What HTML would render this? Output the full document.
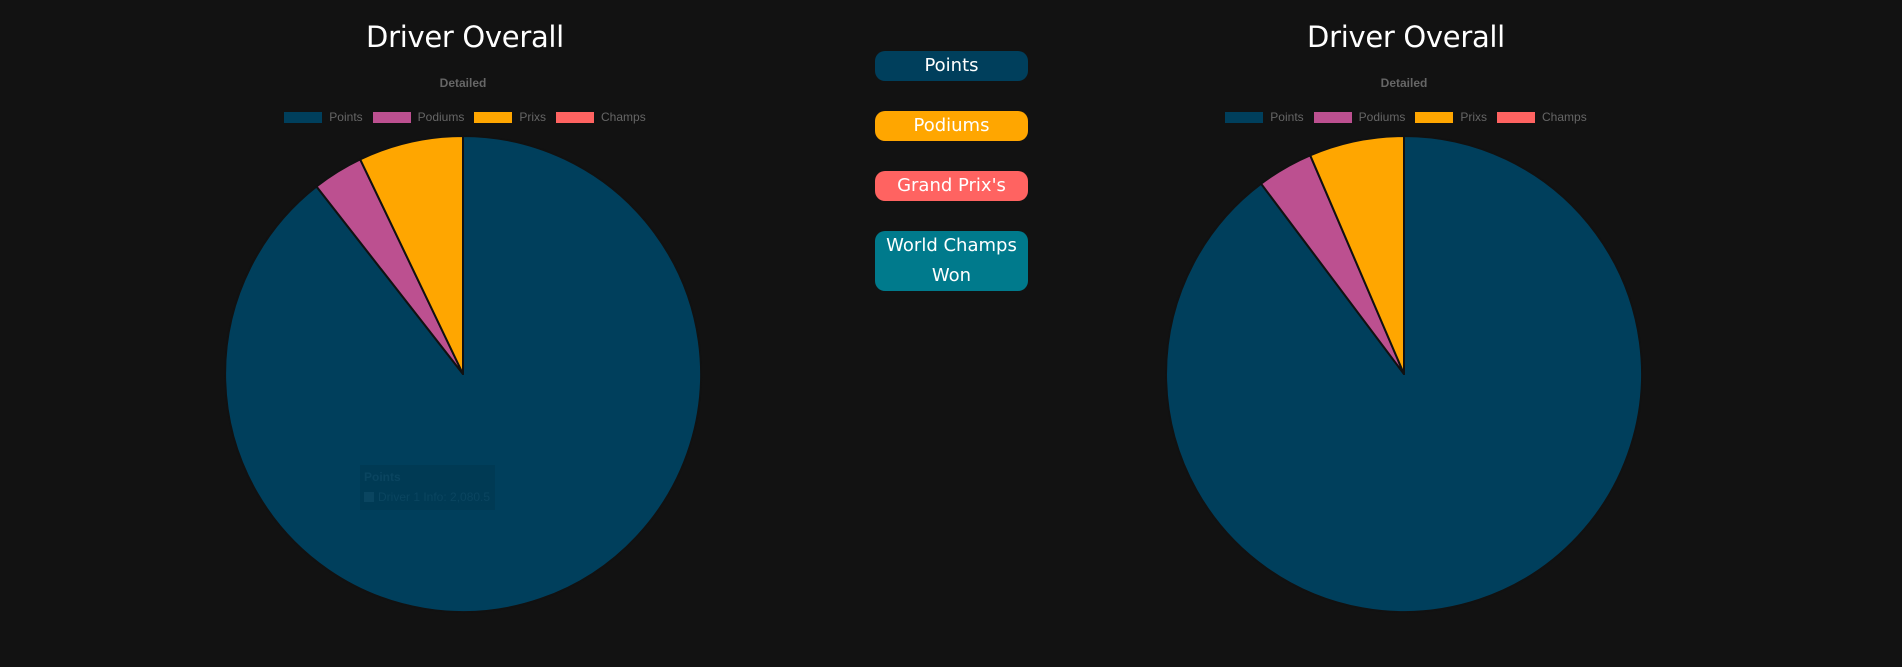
<!DOCTYPE html>
<html><head><style>
body{margin:0;width:1902px;height:667px;background:#121212;position:relative;overflow:hidden;font-family:"DejaVu Sans","Liberation Sans",sans-serif}
.t{position:absolute;top:20px;width:300px;text-align:center;color:#fff;font-size:29px;letter-spacing:-0.3px}
.d{position:absolute;top:76px;width:300px;text-align:center;color:#666;font:bold 12px "Liberation Sans",sans-serif}
.lg{position:absolute;top:110px;width:500px;font:12px "Liberation Sans",sans-serif;color:#666;display:flex;justify-content:center;align-items:center;white-space:nowrap}
.lg i{display:inline-block;width:38px;height:11px;margin:0 7px 0 10px}
.lg i:first-child{margin-left:0}
.b{position:absolute;left:875px;width:153px;border-radius:10px;color:#fff;text-align:center;font-size:18px;line-height:30px}
</style></head><body>
<div class="t" style="left:315px">Driver Overall</div>
<div class="t" style="left:1256px">Driver Overall</div>
<div class="d" style="left:313px">Detailed</div>
<div class="d" style="left:1254px">Detailed</div>
<div class="lg" style="left:215px"><i style="background:#003f5c"></i>Points<i style="background:#bc5090"></i>Podiums<i style="background:#ffa600"></i>Prixs<i style="background:#ff6361"></i>Champs</div>
<div class="lg" style="left:1156px"><i style="background:#003f5c"></i>Points<i style="background:#bc5090"></i>Podiums<i style="background:#ffa600"></i>Prixs<i style="background:#ff6361"></i>Champs</div>
<div class="b" style="top:51px;height:30px;background:#003f5c">Points</div>
<div class="b" style="top:111px;height:30px;background:#ffa600">Podiums</div>
<div class="b" style="top:171px;height:30px;background:#ff6361">Grand Prix's</div>
<div class="b" style="top:231px;height:60px;background:#007a8c">World Champs<br>Won</div>
<svg width="1902" height="667" style="position:absolute;left:0;top:0">
<g stroke="#111" stroke-width="2" stroke-linejoin="round">
<path d="M463 374 L463 136 A238 238 0 1 1 316.5 186.5 Z" fill="#003f5c"/>
<path d="M463 374 L316.5 186.5 A238 238 0 0 1 360.2 159.4 Z" fill="#bc5090"/>
<path d="M463 374 L360.2 159.4 A238 238 0 0 1 463 136 Z" fill="#ffa600"/>
<path d="M1404 374 L1404 136 A238 238 0 1 1 1261.1 183.7 Z" fill="#003f5c"/>
<path d="M1404 374 L1261.1 183.7 A238 238 0 0 1 1310.2 155.3 Z" fill="#bc5090"/>
<path d="M1404 374 L1310.2 155.3 A238 238 0 0 1 1404 136 Z" fill="#ffa600"/>
</g>
<rect x="360" y="465" width="135" height="45" fill="#003a54"/>
<text x="364" y="481" font-family="Liberation Sans" font-size="12" font-weight="bold" fill="#0a4560">Points</text>
<rect x="364" y="492" width="10" height="10" fill="#0a4560"/>
<text x="378" y="501" font-family="Liberation Sans" font-size="12" fill="#0a4560">Driver 1 Info: 2,080.5</text>
</svg>
</body></html>
